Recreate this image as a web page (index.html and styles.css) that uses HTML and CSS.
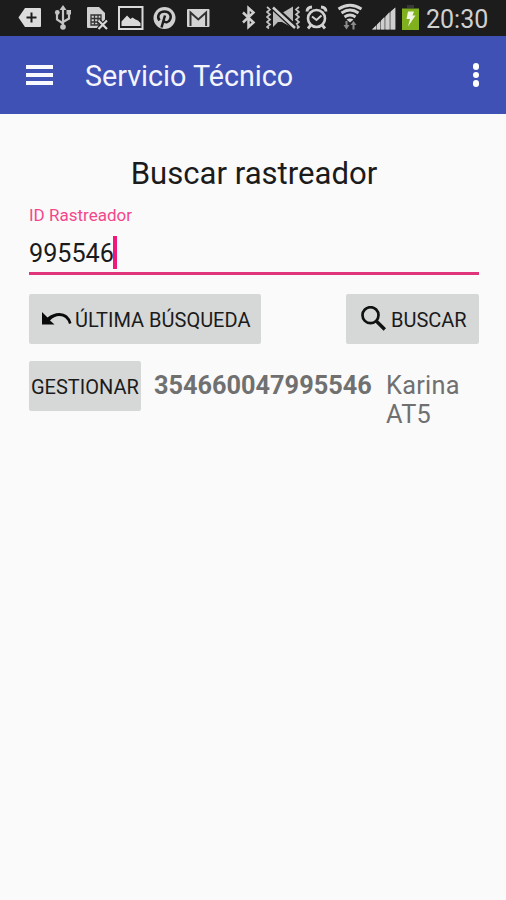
FILE: index.html
```html
<!DOCTYPE html>
<html lang="es">
<head>
    <meta charset="UTF-8">
    <meta name="viewport" content="width=device-width, initial-scale=1.0">
    <title>Servicio Técnico</title>
    <link rel="stylesheet" href="styles.css">
</head>
<body>
    <div class="status">
        <div class="status_left">
            <svg width="28" height="36" viewBox="18 0 28 36">
                <path d="M25 8h15q1 0 1 1v17q0 1-1 1H25L18.500 17.500z" fill="#dcdcdc"/>
                <path d="M31.500 12.500v10M26.500 17.500h10" stroke="#1c1c1c" stroke-width="2"/>
            </svg>
            <svg width="25" height="36" viewBox="54 0 25 36">
                <g stroke="#c4c4c4" stroke-width="2.200" fill="none">
                    <path d="M63 9v17M63 23.500l-6-4v-6M63 22l6-3.500v-5"/>
                </g>
                <path d="M63 5l3.500 5h-7zM66.500 10h4.500v4.500h-4.500z" fill="#c4c4c4"/>
                <circle cx="57.300" cy="12.500" r="2.400" fill="#c4c4c4"/>
                <circle cx="63" cy="27" r="2.800" fill="#c4c4c4"/>
            </svg>
            <svg width="23" height="36" viewBox="87 0 23 36">
                <path d="M88 7h11l6 6v15H88q-1 0-1-1V8q0-1 1-1z" fill="#d0d0d0"/>
                <path d="M91 15h10v10H91zM91 18.500h10M91 22h10M94.500 15v10M98 15v10" fill="none" stroke="#333" stroke-width="1.300"/>
                <path d="M98.500 20.500l8.500 8.500M107 20.500L98.500 29" stroke="#1c1c1c" stroke-width="4.500"/>
                <path d="M98.500 20.500l8.500 8.500M107 20.500L98.500 29" stroke="#d8d8d8" stroke-width="2.200"/>
            </svg>
            <svg width="27" height="36" viewBox="118 0 27 36">
                <rect x="119" y="7" width="23.500" height="22" fill="none" stroke="#dadada" stroke-width="2"/>
                <path d="M121.500 26v-4.500l5.500-6 3.500 3.500 2-1.500 3 2 2.500 1 2.500 2.500v3z" fill="#dadada"/>
            </svg>
            <svg width="26" height="36" viewBox="153 0 26 36">
                <circle cx="164.500" cy="18" r="11" fill="#cfcfcf"/>
                <path d="M159.500 20.500c-3-4-.5-9 5-9 5 0 7.500 4 5.500 8-1.500 3.500-5 3.500-6 1.500M165 15.500l-3.500 12" fill="none" stroke="#1c1c1c" stroke-width="2.500"/>
            </svg>
            <svg width="23" height="36" viewBox="187 0 23 36">
                <rect x="187" y="9" width="22.500" height="18" rx="1" fill="#d4d4d4"/>
                <path d="M190.500 26V12.500l7.800 7 7.800-7V26" fill="none" stroke="#333" stroke-width="2"/>
            </svg>
        </div>
        <div class="status_right">
            <svg width="20" height="36" viewBox="241 0 20 36">
                <path d="M243 12.500l10.500 10-5 4.500V8l5 4.500-10.500 10" fill="none" stroke="#cfcfcf" stroke-width="2.500"/>
            </svg>
            <svg width="34" height="36" viewBox="266 0 34 36">
                <g fill="none" stroke="#c4c4c4" stroke-width="1.700">
                    <path d="M267 7l3 2.500-3 2.500 3 2.500-3 2.500 3 2.500-3 2.500 3 2.500-3 2.500 2 1.500M299 7l-3 2.500 3 2.500-3 2.500 3 2.500-3 2.500 3 2.500-3 2.500 3 2.500-2 1.500"/>
                </g>
                <path d="M273 8v19l5-5h4l11 6V6.500L282 13h-4z" fill="#bcbcbc"/>
                <path d="M272 6l23 21.500" stroke="#1c1c1c" stroke-width="6"/>
                <path d="M273 7.500l22 20.500" stroke="#cfcfcf" stroke-width="2.600"/>
            </svg>
            <svg width="27" height="36" viewBox="305 0 27 36">
                <circle cx="316.500" cy="18.500" r="8.500" fill="none" stroke="#d2d2d2" stroke-width="2.600"/>
                <path d="M307 11.500q0-4 5-4.500M326 11.500q0-4-5-4.500M310.500 25.500l-2.500 3M322.500 25.500l2.500 3" fill="none" stroke="#d2d2d2" stroke-width="2.800"/>
                <path d="M312 16.500l4.500 3.500 5-4.500" fill="none" stroke="#d2d2d2" stroke-width="2"/>
            </svg>
            <svg width="30" height="36" viewBox="337 0 30 36">
                <g fill="none" stroke="#d2d2d2" stroke-width="2.800">
                    <path d="M338.500 9q11.500-7.500 23 0M341.500 13q8.500-6 17 0M344.500 17q5.500-4 11 0"/>
                </g>
                <path d="M346.500 19.500q3.500-2 7 0l-3.500 3z" fill="#d2d2d2"/>
                <path d="M345.500 21h2v4h2l-3 4.500-3-4.500h2zM352.500 29.500h2v-4.500h2l-3-4-3 4h2z" fill="#8c8c8c"/>
            </svg>
            <svg width="25" height="36" viewBox="372 0 25 36">
                <path d="M372 29.500L395.300 7.500v22z" fill="#777"/>
                <path d="M372 29.500l4-4v4zM377 24.500l3-3v8h-3zM381 20.500l3.300-3.500v12.500H381zM385.500 16.500l4-4.500v17.500h-4zM390.700 11.500l4.600-4v22h-4.600z" fill="#cfcfcf"/>
            </svg>
            <svg width="19" height="36" viewBox="402 0 19 36">
                <path d="M407 5h7v3h-7z" fill="#383838"/>
                <rect x="402" y="8.500" width="17" height="21.500" fill="#80b01e"/>
                <path d="M408 11.500h6l-1.500 4h3L408 26.500l2-7.500h-3.500z" fill="#f0f5e4"/>
            </svg>
            <span class="hora">20:30</span>
        </div>
    </div>

    <header>
        <div class="menu">
            <div class="linea"></div>
            <div class="linea"></div>
            <div class="linea"></div>
        </div>
        <h1>Servicio Técnico</h1>
        <div class="opciones">
            <div class="punto"></div>
            <div class="punto"></div>
            <div class="punto"></div>
        </div>
    </header>

    <main>
        <h2>Buscar rastreador</h2>
        <div class="label">ID Rastreador</div>
        <div class="campo">
            <span class="valor">995546</span>
            <div class="cursor"></div>
        </div>

        <div class="botones">
            <button class="boton boton_ultima">
                <svg width="30" height="16" viewBox="0 0 30 16">
                    <path d="M0 1v12.500h12.500L8 9.500Q12 5 17.500 5 24.500 5 27 13l2.500-1Q26.500 2 17.500 2 11 2 5.500 6.500z" fill="#0a0a0a"/>
                </svg>
                <span>ÚLTIMA BÚSQUEDA</span>
            </button>
            <button class="boton boton_buscar">
                <svg width="26" height="26" viewBox="0 0 26 26">
                    <circle cx="9.500" cy="9.200" r="8" fill="none" stroke="#111" stroke-width="2.700"/>
                    <path d="M15 14.700l8.800 8.800" stroke="#111" stroke-width="3.400"/>
                </svg>
                <span>BUSCAR</span>
            </button>
        </div>

        <div class="resultado">
            <button class="boton boton_gestionar"><span>GESTIONAR</span></button>
            <div class="numero">354660047995546</div>
            <div class="nombre">Karina AT5</div>
        </div>
    </main>
</body>
</html>
```
FILE: styles.css
```css
body{
    margin: 0;
    background-color: #FAFAFA;
    font-family: Roboto, "Liberation Sans", sans-serif;
    color: #1b1b1b;
}
svg{
    display: block;
    flex-shrink: 0;
}

/*status*/
.status{
    display: flex;
    justify-content: space-between;
    height: 36px;
    padding: 0 18px;
    background-color: #1c1c1c;
}
.status_left{
    display: flex;
    gap: 8px;
}
.status_right{
    display: flex;
    gap: 5px;
}
.hora{
    width: 62px;
    line-height: 40px;
    font-size: 25px;
    color: #d0d0d0;
    white-space: nowrap;
}

/*header*/
header{
    display: flex;
    align-items: center;
    height: 78px;
    background-color: #3F51B5;
}
.menu{
    display: flex;
    flex-direction: column;
    gap: 4px;
    width: 27px;
    margin-left: 26px;
    margin-right: 32px;
    margin-bottom: 1px;
}
.linea{
    height: 4px;
    background-color: #f8f8ff;
}
h1{
    flex: 1;
    margin: 0;
    padding-top: 1px;
    font-size: 28.7px;
    font-weight: normal;
    color: #f4f4fc;
}
.opciones{
    display: flex;
    flex-direction: column;
    gap: 2px;
    margin-right: 27px;
}
.punto{
    width: 6.5px;
    height: 6.5px;
    border-radius: 50%;
    background-color: #fff;
}

/*contenido*/
main{
    padding: 40px 27px 0 29px;
}
h2{
    margin: 0;
    line-height: 40px;
    font-size: 31.1px;
    font-weight: normal;
    text-align: center;
}
.label{
    margin-top: 11px;
    line-height: 20px;
    font-size: 17px;
    color: #f4478a;
}
.campo{
    display: flex;
    align-items: center;
    box-sizing: border-box;
    height: 50px;
    padding-top: 8px;
    border-bottom: 3px solid #e0357a;
}
.valor{
    width: 84px;
    padding-top: 2px;
    font-size: 25.2px;
}
.cursor{
    width: 4px;
    height: 33px;
    background-color: #f0187a;
}

/*botones*/
.botones{
    display: flex;
    justify-content: space-between;
    margin-top: 19px;
}
.boton{
    display: flex;
    align-items: center;
    height: 50px;
    padding: 0;
    border: none;
    border-radius: 2px;
    background-color: #D6D8D7;
    font-family: inherit;
    font-size: 20px;
    color: #1b1b1b;
    white-space: nowrap;
}
.boton span{
    padding-top: 1px;
}
.boton_ultima{
    width: 232px;
    padding-left: 13px;
    gap: 3px;
}
.boton_buscar{
    width: 133px;
    padding-left: 15px;
    gap: 4px;
}
.boton_gestionar{
    width: 112px;
    padding-left: 2px;
}

/*resultado*/
.resultado{
    display: flex;
    margin-top: 17px;
    font-size: 25.3px;
    line-height: 29px;
    color: #707070;
}
.numero{
    width: 218px;
    margin-top: 10px;
    margin-left: 13px;
    margin-right: 14px;
    font-weight: bold;
}
.nombre{
    width: 80px;
    margin-top: 10px;
    letter-spacing: 0.3px;
}
```
